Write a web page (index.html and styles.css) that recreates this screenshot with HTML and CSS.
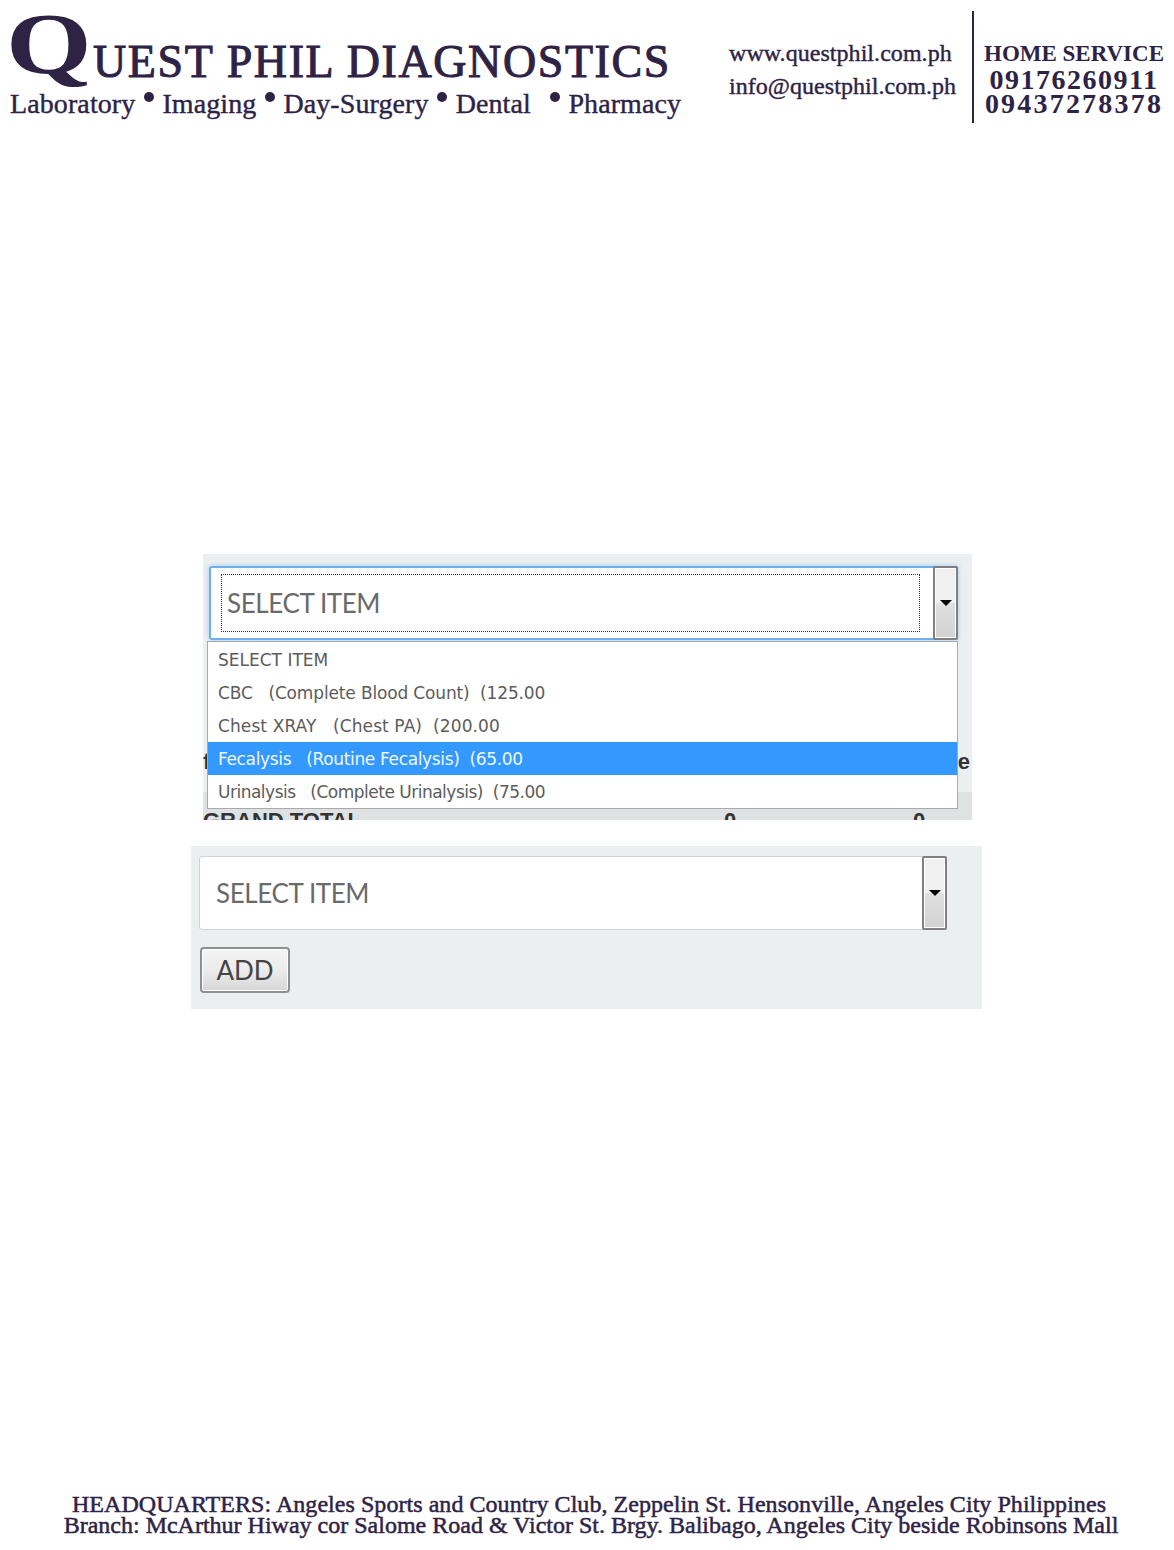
FILE: index.html
```html
<!DOCTYPE html>
<html lang="en">
<head>
    <meta charset="UTF-8">
    <meta name="viewport" content="width=device-width, initial-scale=1.0">
    <title>Quest Phil Diagnostics</title>
    <link rel="stylesheet" href="styles.css">
</head>
<body>
    <header class="letterhead">
        <div class="brand">
            <div class="brand-name"><span class="brand-q">Q</span><span class="brand-rest">UEST PHIL DIAGNOSTICS</span></div>
            <div class="brand-services">
                <span>Laboratory</span><i class="dot"></i>
                <span>Imaging</span><i class="dot"></i>
                <span>Day-Surgery</span><i class="dot"></i>
                <span>Dental</span><i class="dot dot-wide"></i>
                <span>Pharmacy</span>
            </div>
        </div>
        <div class="contacts">
            <p>www.questphil.com.ph</p>
            <p>info@questphil.com.ph</p>
        </div>
        <div class="home-service">
            <h2>HOME SERVICE</h2>
            <p>09176260911</p>
            <p class="second-number">09437278378</p>
        </div>
    </header>

    <section class="shot shot-open">
        <div class="select select-focus">
            <div class="select-value"><span class="focus-ring">SELECT ITEM</span></div>
            <div class="select-arrow"><i></i></div>
        </div>
        <div class="table-row"><span>f</span><span>e</span></div>
        <div class="table-total"><span>GRAND TOTAL</span><span>0</span><span>0</span></div>
        <ul class="options">
            <li>SELECT ITEM</li>
            <li class="opt-cbc">CBC &nbsp; (Complete Blood Count) &nbsp;(125.00</li>
            <li class="opt-chest">Chest XRAY &nbsp; (Chest PA) &nbsp;(200.00</li>
            <li class="opt-fecalysis active">Fecalysis &nbsp; (Routine Fecalysis) &nbsp;(65.00</li>
            <li class="opt-urinalysis">Urinalysis &nbsp; (Complete Urinalysis) &nbsp;(75.00</li>
        </ul>
    </section>

    <section class="shot shot-closed">
        <div class="select">
            <div class="select-value">SELECT ITEM</div>
            <div class="select-arrow"><i></i></div>
        </div>
        <button class="add-btn">ADD</button>
    </section>

    <footer class="address">
        <p>HEADQUARTERS: Angeles Sports and Country Club, Zeppelin St. Hensonville, Angeles City Philippines</p>
        <p>Branch: McArthur Hiway cor Salome Road &amp; Victor St. Brgy. Balibago, Angeles City beside Robinsons Mall</p>
    </footer>
</body>
</html>
```

FILE: styles.css
```css
body {
    margin: 0;
    min-height: 1550px;
    display: flex;
    flex-direction: column;
    background: #fff;
    color: #2e2345;
    font-family: "Liberation Serif", serif;
}

p, h2, ul {
    margin: 0;
    padding: 0;
}

.letterhead {
    display: flex;
    height: 130px;
    padding-left: 10px;
}

.brand {
    flex: 0 0 719px;
}

.brand-name {
    display: flex;
    align-items: baseline;
    height: 89px;
    line-height: 96px;
}

.brand-q {
    flex: 0 0 83px;
    font-size: 86px;
    font-weight: bold;
    transform: translate(-4px, -4px) scaleX(1.28);
    transform-origin: left bottom;
}

.brand-rest {
    font-size: 46px;
    letter-spacing: 1.6px;
    -webkit-text-stroke: 1px #2e2345;
}

.brand-services {
    display: flex;
    align-items: center;
    font-size: 28px;
    line-height: 30px;
    letter-spacing: 0.1px;
    -webkit-text-stroke: 0.4px #2e2345;
}

.dot {
    flex: none;
    width: 10px;
    height: 10px;
    border-radius: 50%;
    background: #2e2345;
    margin: -14px 8.5px 0;
}

.dot-wide {
    margin-left: 19px;
}

.contacts {
    flex: 0 0 243px;
    height: 86px;
    margin-top: 11px;
    padding-top: 26px;
    border-right: 2px solid #2e2345;
    font-size: 24px;
    line-height: 33px;
    letter-spacing: 0.05px;
    -webkit-text-stroke: 0.4px #2e2345;
}

.home-service {
    padding: 39px 0 0 10px;
    text-align: center;
    font-weight: bold;
    font-size: 28px;
    line-height: 24px;
}

.home-service h2 {
    font-size: 23px;
    line-height: 29px;
    white-space: nowrap;
}

.home-service p {
    letter-spacing: 1.5px;
}

.home-service .second-number {
    letter-spacing: 2.2px;
}

.shot {
    background: #ecefef;
    font-family: Lato, sans-serif;
    color: #6a6a6a;
}

.shot-open {
    position: relative;
    margin: 424px 0 0 203px;
    width: 769px;
    height: 266px;
    padding: 12px 14px 0 6px;
    box-sizing: border-box;
    overflow: hidden;
}

.shot-closed {
    margin: 26px 0 0 191px;
    width: 791px;
    height: 163px;
    padding: 10px 35px 0 8px;
    box-sizing: border-box;
}

.select {
    display: flex;
    height: 74px;
    box-sizing: border-box;
    background: #fff;
    border: 1px solid #cfd2d2;
    border-radius: 3px;
    font-size: 26px;
    letter-spacing: -0.4px;
}

.select-focus {
    border: 2px solid #6cb0ee;
    box-shadow: 0 0 5px #9cc9f2;
}

.select-value {
    flex: 1;
    display: flex;
    align-items: center;
    padding-left: 16px;
}

.focus-ring {
    flex: 1;
    margin: 0 15px 0 -6px;
    padding-left: 5px;
    height: 56px;
    line-height: 56px;
    border: 1px dotted #333;
}

.select-arrow {
    flex: 0 0 25px;
    margin: -1px;
    display: flex;
    align-items: center;
    justify-content: center;
    box-sizing: border-box;
    border: 2px solid #808080;
    border-radius: 2px;
    background: linear-gradient(#f0f0f0 0 50%, #e0e0e0 50%, #d2d2d2);
    box-shadow: inset 0 0 0 1px #fff;
}

.select-focus .select-arrow {
    margin: -2px;
}

.select-arrow i {
    border: 6px solid transparent;
    border-top: 6px solid #000;
    border-bottom: 0;
}

.table-row {
    display: flex;
    justify-content: space-between;
    margin: 109px -12px 0 -6px;
    height: 43px;
    font: bold 22px "Liberation Sans", sans-serif;
    color: #333;
}

.table-total {
    display: grid;
    grid-template-columns: 521px 189px 1fr;
    background: #dfe2e3;
    margin: 0 -14px 0 -6px;
    height: 40px;
    padding-top: 16px;
    font: bold 22px "Liberation Sans", sans-serif;
    color: #333;
}

.options {
    position: absolute;
    top: 87px;
    left: 4px;
    width: 751px;
    box-sizing: border-box;
    list-style: none;
    background: #fff;
    border: 1px solid #a9a9a9;
    padding-top: 1px;
    font-family: "DejaVu Sans", sans-serif;
    font-size: 17px;
    color: #5c5c5c;
}

.options li {
    height: 33px;
    line-height: 35px;
    padding-left: 10px;
    white-space: nowrap;
}

.options .opt-cbc {
    letter-spacing: -0.15px;
}

.options .opt-chest {
    letter-spacing: 0.1px;
}

.options .opt-fecalysis {
    letter-spacing: -0.35px;
}

.options .opt-urinalysis {
    letter-spacing: -0.5px;
}

.options .active {
    background: #3399ff;
    color: #eef6ff;
}

.add-btn {
    display: block;
    margin: 17px 0 0 1px;
    width: 90px;
    height: 46px;
    padding: 0;
    font-family: Lato, sans-serif;
    font-size: 26px;
    color: #444;
    border: 2px solid #8f8f8f;
    border-radius: 4px;
    background: linear-gradient(#f4f4f4, #ececec 50%, #d6d6d6);
    box-shadow: inset 0 0 0 1px #fff;
}

.address {
    margin-top: auto;
    padding-bottom: 14px;
    text-align: center;
    font-size: 24px;
    line-height: 21px;
    -webkit-text-stroke: 0.5px #2e2345;
    white-space: nowrap;
}

.address p:first-child {
    padding-left: 4px;
    letter-spacing: 0.05px;
}

.address p:last-child {
    padding-left: 8px;
}
```
